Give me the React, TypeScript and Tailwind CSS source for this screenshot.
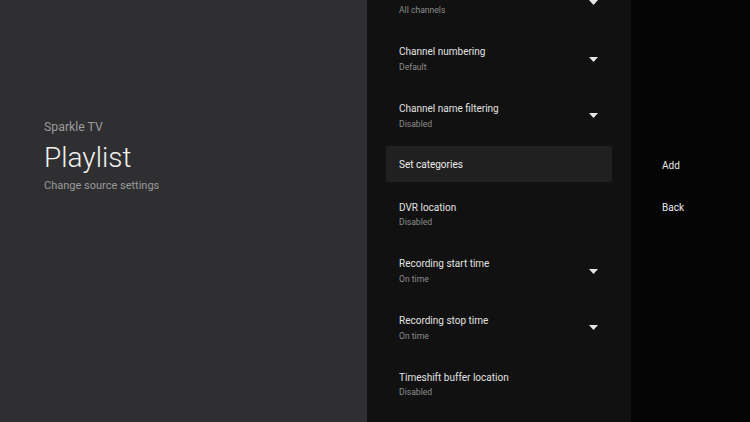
import React from 'react';

type Item = {
  title: string;
  value?: string;
  dropdown?: boolean;
  focused?: boolean;
};

const ITEMS: Item[] = [
  { title: 'Channel filtering', value: 'All channels', dropdown: true },
  { title: 'Channel numbering', value: 'Default', dropdown: true },
  { title: 'Channel name filtering', value: 'Disabled', dropdown: true },
  { title: 'Set categories', focused: true },
  { title: 'DVR location', value: 'Disabled' },
  { title: 'Recording start time', value: 'On time', dropdown: true },
  { title: 'Recording stop time', value: 'On time', dropdown: true },
  { title: 'Timeshift buffer location', value: 'Disabled' },
];

const DropArrow = () => (
  <svg width="9" height="5" viewBox="0 0 9 5" className="shrink-0">
    <polygon points="0,0 9,0 4.5,5" fill="#e6e6e6" />
  </svg>
);

const SettingRow: React.FC<{ item: Item }> = ({ item }) => {
  if (item.focused) {
    return (
      <div className="h-[42px] pt-[2px]">
        <div className="h-[36px] rounded-[2px] bg-[#202020] px-[13px] pt-[2px] flex items-center">
          <span className="text-[10px] leading-[14px] text-[#ececec]">{item.title}</span>
        </div>
      </div>
    );
  }
  return (
    <div className="h-[56.7px] px-[13px] flex items-center justify-between">
      <div className="flex flex-col gap-[1.8px]">
        <span className="text-[10px] leading-[14px] text-[#e2e2e2]">{item.title}</span>
        <span className="text-[8.6px] leading-[12px] text-[#8c8c8c]">{item.value}</span>
      </div>
      {item.dropdown && (
        <div className="pr-[1px]">
          <DropArrow />
        </div>
      )}
    </div>
  );
};

export default function App() {
  return (
    <div
      className="w-[750px] h-[422px] overflow-hidden flex bg-[#050505]"
      style={{ fontFamily: 'Roboto, "Noto Sans", sans-serif' }}
    >
      {/* Guidance panel */}
      <div className="w-[367px] h-full bg-[#2f2f31] pl-[44px] pt-[119px] flex flex-col">
        <span className="text-[12.3px] leading-[16px] text-[#9c9c9c]">Sparkle TV</span>
        <span className="mt-[5.5px] text-[28px] leading-[34px] font-light text-[#f0f0f0]">Playlist</span>
        <span className="mt-[4.6px] text-[11px] leading-[14px] text-[#9a9a9a]">Change source settings</span>
      </div>

      {/* Settings list */}
      <div className="w-[264px] h-full bg-[#111111] overflow-hidden">
        <div className="mt-[-26px] mx-[19px] flex flex-col">
          {ITEMS.map((item) => (
            <SettingRow key={item.title} item={item} />
          ))}
        </div>
      </div>

      {/* Actions */}
      <div className="flex-1 h-full bg-[#050505] pl-[31px] pt-[159px] flex flex-col">
        <span className="text-[10px] leading-[14px] text-[#e8e8e8]">Add</span>
        <span className="mt-[28.3px] text-[10px] leading-[14px] text-[#e8e8e8]">Back</span>
      </div>
    </div>
  );
}
